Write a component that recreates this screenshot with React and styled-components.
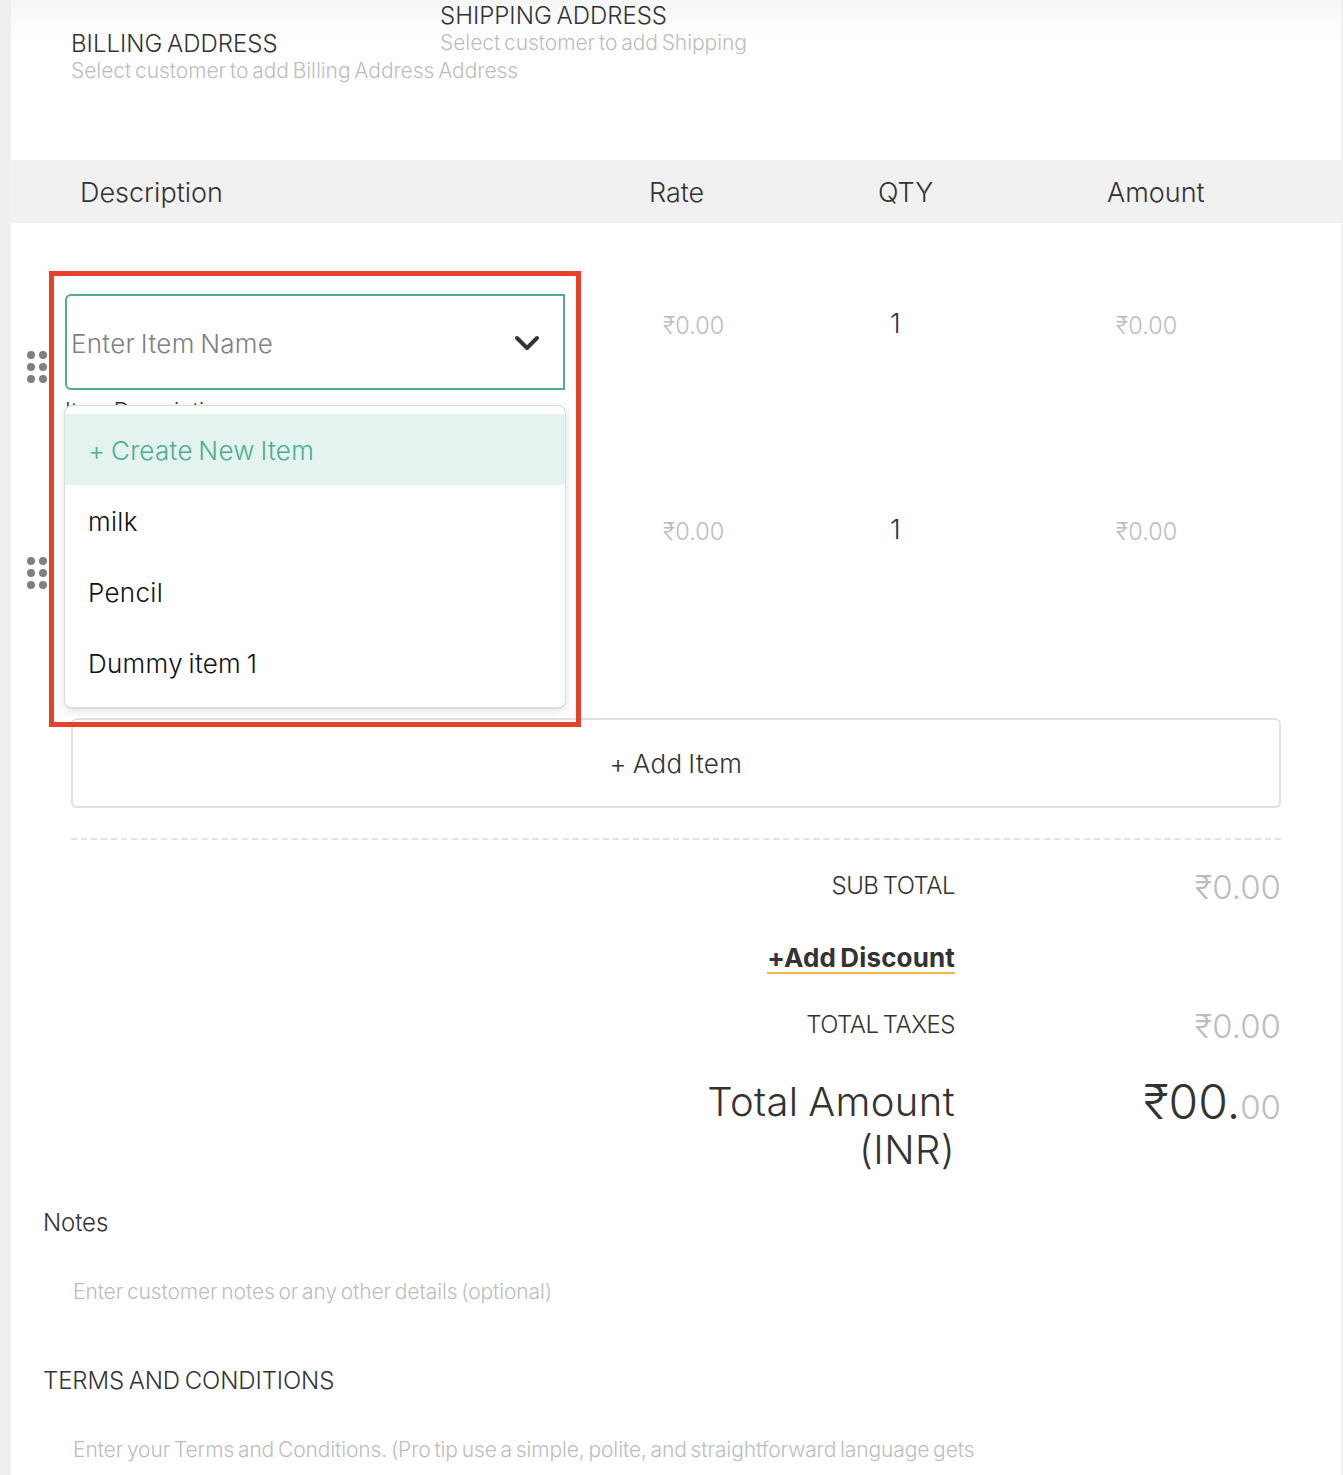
import styled, { createGlobalStyle } from "styled-components";

const GlobalStyle = createGlobalStyle`
  body {
    margin: 0;
    background: #efefef;
    font-family: "Inter", "Liberation Sans", sans-serif;
    word-spacing: -2px;
    color: #333;
  }
`;

const Page = styled.div`
  position: relative;
  height: 1475px;
  overflow: hidden;
  padding: 0 2px 0 11px;
`;

const Card = styled.div`
  background: #fff;
  height: 1475px;
`;

const AddressRow = styled.div`
  display: flex;
  height: 160px;
  padding-left: 60px;
  box-sizing: border-box;
  background: linear-gradient(#f6f6f6, #fff 42px);
`;

const AddressBlock = styled.div`
  width: ${(p) => p.$width}px;
  padding-top: ${(p) => p.$top}px;
`;

const AddressTitle = styled.div`
  font-size: 24px;
  line-height: 27px;
  font-weight: 300;
  letter-spacing: 0;
  white-space: nowrap;
`;

const Hint = styled.div`
  font-size: 21px;
  line-height: 28px;
  font-weight: 300;
  letter-spacing: -0.06px;
  color: #bdbdbd;
  white-space: nowrap;
`;

const TableHead = styled.div`
  display: grid;
  grid-template-columns: 569px 229px 229px 1fr;
  align-items: center;
  box-sizing: border-box;
  height: 63px;
  padding: 2px 0 0 69px;
  background: #f1f1f1;
  font-size: 27px;
  font-weight: 300;
`;

const ItemRow = styled.div`
  position: relative;
  display: grid;
  grid-template-columns: 38px 598px 227px 226px 1fr;
  height: ${(p) => p.$height}px;
  padding-left: 16px;
`;

const Grip = styled.svg`
  display: block;
  width: 20px;
  height: 32px;
  margin-top: 128px;
  fill: #808080;
`;

const ItemCell = styled.div`
  position: relative;
  padding-top: 71px;
`;

const SelectBox = styled.div`
  display: flex;
  align-items: center;
  justify-content: space-between;
  box-sizing: border-box;
  width: 500px;
  height: 96px;
  padding: 2px 23px 0 4px;
  border: 2px solid #52ad8f;
  border-radius: 6px 0 0 6px;
  font-size: 26px;
  font-weight: 300;
  letter-spacing: 0.3px;
  color: #808080;
`;

const Chevron = styled.svg`
  width: 26px;
  height: 16px;
  fill: none;
  stroke: #333;
  stroke-width: 4;
  stroke-linecap: round;
  stroke-linejoin: round;
`;

const ItemDescription = styled.div`
  margin-top: 6px;
  font-size: 22px;
  line-height: 28px;
  font-weight: 300;
`;

const Menu = styled.div`
  position: absolute;
  top: 182px;
  left: -1px;
  z-index: 2;
  width: 500px;
  height: 284px;
  padding: 8px 0 9px;
  background: #fff;
  border: 1px solid #dcdcdc;
  border-bottom-width: 2px;
  border-radius: 8px;
  box-shadow: 0 2px 10px rgba(0, 0, 0, 0.12);
`;

const MenuItem = styled.div`
  display: flex;
  align-items: center;
  height: 71px;
  padding: 2px 0 0 23px;
  box-sizing: border-box;
  font-size: 26px;
  font-weight: 300;
  letter-spacing: 0.3px;
  color: ${(p) => (p.$create ? "#4caf8e" : "#111")};
  background: ${(p) => (p.$create ? "#e4f3ef" : "transparent")};
`;

const Money = styled.div`
  padding-top: 91px;
  font-size: 23.5px;
  line-height: 24px;
  font-weight: 300;
  color: #bdbdbd;
`;

const Qty = styled.div`
  padding-top: 85px;
  font-size: 27px;
  line-height: 32px;
  font-weight: 300;
  color: #333;
`;

const AddItem = styled.div`
  display: flex;
  align-items: center;
  justify-content: center;
  box-sizing: border-box;
  height: 90px;
  margin: 0 60px;
  border: 2px solid #e0e0e0;
  border-radius: 6px;
  font-size: 26px;
  font-weight: 300;
  letter-spacing: 0.4px;
`;

const Totals = styled.div`
  display: grid;
  grid-template-columns: 1fr 326px;
  grid-auto-rows: min-content;
  margin: 30px 60px 0;
  padding: 30px 0 34px;
  border-top: 2px dashed #e2e2e2;
  text-align: right;
`;

const TotalLabel = styled.div`
  font-size: 24px;
  line-height: 32px;
  font-weight: 300;
  letter-spacing: -0.5px;
  height: ${(p) => p.$height}px;
`;

const TotalValue = styled.div`
  font-size: 33px;
  line-height: 34px;
  font-weight: 300;
  color: #bdbdbd;
`;

const Discount = styled.span`
  display: inline-block;
  font-size: 26px;
  line-height: 28px;
  font-weight: 700;
  letter-spacing: 0.14px;
  border-bottom: 2px solid #f0b94a;
`;

const GrandLabel = styled.div`
  font-size: 40px;
  line-height: 48px;
  font-weight: 300;
  letter-spacing: 0.37px;
`;

const GrandValue = styled.div`
  font-size: 48px;
  line-height: 48px;
  font-weight: 300;

  small {
    font-size: 33px;
    color: #bdbdbd;
  }
`;

const NoteSection = styled.section`
  height: ${(p) => p.$height}px;
  padding: 0 32px;
`;

const NoteTitle = styled.div`
  font-size: 24px;
  line-height: 30px;
  font-weight: 300;
  letter-spacing: -0.1px;
`;

const NoteHint = styled(Hint)`
  margin: 40px 0 0 30px;
  letter-spacing: -0.11px;
`;

const Annotation = styled.div`
  position: absolute;
  top: 271px;
  left: 49px;
  z-index: 3;
  box-sizing: border-box;
  width: 532px;
  height: 456px;
  border: 5px solid #e8412a;
  pointer-events: none;
`;

const GripIcon = () => (
  <Grip viewBox="0 0 20 32">
    {[4, 16, 28].map((y) => (
      <g key={y}>
        <circle cx="4" cy={y} r="4" />
        <circle cx="16" cy={y} r="4" />
      </g>
    ))}
  </Grip>
);

const App = () => {
  return (
    <Page>
      <GlobalStyle />
      <Card>
        <AddressRow>
          <AddressBlock $width={369} $top={30}>
            <AddressTitle>BILLING ADDRESS</AddressTitle>
            <Hint>Select customer to add Billing Address Address</Hint>
          </AddressBlock>
          <AddressBlock $width={400} $top={2}>
            <AddressTitle>SHIPPING ADDRESS</AddressTitle>
            <Hint>Select customer to add Shipping</Hint>
          </AddressBlock>
        </AddressRow>

        <TableHead>
          <div>Description</div>
          <div>Rate</div>
          <div>QTY</div>
          <div>Amount</div>
        </TableHead>

        <ItemRow $height={206}>
          <GripIcon />
          <ItemCell>
            <SelectBox>
              Enter Item Name
              <Chevron viewBox="0 0 26 16">
                <path d="M3 3l10 10L23 3" />
              </Chevron>
            </SelectBox>
            <ItemDescription>Item Description</ItemDescription>
            <Menu>
              <MenuItem $create>+ Create New Item</MenuItem>
              <MenuItem>milk</MenuItem>
              <MenuItem>Pencil</MenuItem>
              <MenuItem>Dummy item 1</MenuItem>
            </Menu>
          </ItemCell>
          <Money>₹0.00</Money>
          <Qty>1</Qty>
          <Money>₹0.00</Money>
        </ItemRow>

        <ItemRow $height={289}>
          <GripIcon />
          <ItemCell />
          <Money>₹0.00</Money>
          <Qty>1</Qty>
          <Money>₹0.00</Money>
        </ItemRow>

        <AddItem>+ Add Item</AddItem>

        <Totals>
          <TotalLabel $height={73}>SUB TOTAL</TotalLabel>
          <TotalValue>₹0.00</TotalValue>
          <TotalLabel $height={66} as="div">
            <Discount>+Add Discount</Discount>
          </TotalLabel>
          <div />
          <TotalLabel $height={69}>TOTAL TAXES</TotalLabel>
          <TotalValue>₹0.00</TotalValue>
          <GrandLabel>
            Total Amount
            <br />
            (INR)
          </GrandLabel>
          <GrandValue>
            ₹00.<small>00</small>
          </GrandValue>
        </Totals>

        <NoteSection $height={158}>
          <NoteTitle>Notes</NoteTitle>
          <NoteHint>Enter customer notes or any other details (optional)</NoteHint>
        </NoteSection>
        <NoteSection $height={100}>
          <NoteTitle>TERMS AND CONDITIONS</NoteTitle>
          <NoteHint>
            Enter your Terms and Conditions. (Pro tip  use a simple, polite, and straightforward language gets
          </NoteHint>
        </NoteSection>
      </Card>
      <Annotation />
    </Page>
  );
};

export default App;
